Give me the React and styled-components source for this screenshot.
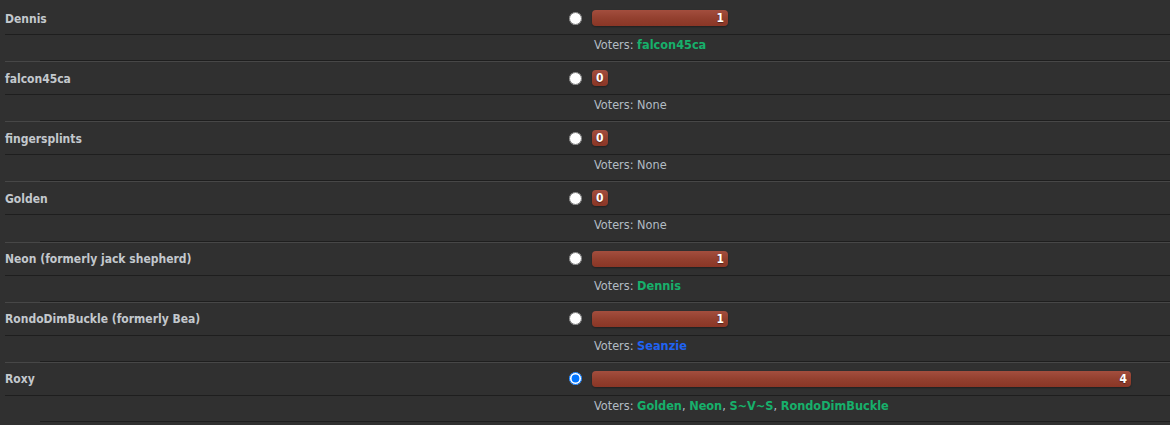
import React from "react";
import styled, { createGlobalStyle } from "styled-components";

const Global = createGlobalStyle`
  html, body {
    margin: 0;
    padding: 0;
    background: #303030;
    overflow: hidden;
  }
  body {
    font-family: "DejaVu Sans Condensed", "DejaVu Sans", Tahoma, sans-serif;
    font-stretch: condensed;
    font-size: 12px;
  }
`;

const List = styled.div`
  margin-top: 1px;
  width: 1170px;
`;

const Option = styled.div`
  border-top: 1px solid ${(p) => (p.$first ? "transparent" : "#474747")};
  margin-left: 5px;
`;

const MainRow = styled.div`
  display: grid;
  grid-template-columns: 558px 29px 1fr;
  align-items: center;
  height: 32px;
`;

const Name = styled.div`
  color: #c3c8cd;
  font-weight: bold;
  padding-top: 1px;
`;

const RadioCell = styled.div`
  display: flex;
  align-items: center;
  padding-left: 6px;
`;

const Radio = styled.input`
  width: 13px;
  height: 13px;
  margin: 0;
`;

const BarCell = styled.div`
  display: flex;
  align-items: center;
`;

const Bar = styled.div`
  box-sizing: border-box;
  height: 16px;
  min-width: 15px;
  padding: 0 4px;
  border-radius: 4px;
  background: linear-gradient(to bottom, #a34e3e 0%, #93402f 50%, #8a3626 100%);
  box-shadow: 0 1px 2px rgba(0, 0, 0, 0.35);
  color: #ffffff;
  font-weight: bold;
  font-size: 12px;
  line-height: 16px;
  text-align: right;
  text-shadow: 0 1px 1px rgba(0, 0, 0, 0.4);
`;

const VotersRow = styled.div`
  display: grid;
  grid-template-columns: 558px 29px 1fr;
  border-top: 1px solid #1e1e1e;
  height: 25.17px;
`;

const VotersText = styled.div`
  grid-column: 3;
  padding: 2px 0 0 2px;
  line-height: 16px;
  font-size: 12.6px;
  color: #b3bcc4;
`;

const Voter = styled.span`
  font-weight: bold;
  color: ${(p) => p.$color};
`;

const BottomLine = styled.div`
  margin-left: 35px;
  height: 1px;
  background: #1e1e1e;
`;

const GREEN = "#17b06b";
const BLUE = "#2063f2";

const options = [
  { name: "Dennis", votes: 1, voters: [["falcon45ca", GREEN]] },
  { name: "falcon45ca", votes: 0, voters: [] },
  { name: "fingersplints", votes: 0, voters: [] },
  { name: "Golden", votes: 0, voters: [] },
  { name: "Neon (formerly jack shepherd)", votes: 1, voters: [["Dennis", GREEN]] },
  { name: "RondoDimBuckle (formerly Bea)", votes: 1, voters: [["Seanzie", BLUE]] },
  {
    name: "Roxy",
    votes: 4,
    checked: true,
    voters: [
      ["Golden", GREEN],
      ["Neon", GREEN],
      ["S~V~S", GREEN],
      ["RondoDimBuckle", GREEN],
    ],
  },
];

const MAX = 4;
const FULL = 538;

export default function App() {
  return (
    <>
      <Global />
      <List>
        {options.map((o, i) => (
          <Option key={o.name} $first={i === 0}>
            <MainRow>
              <Name>{o.name}</Name>
              <RadioCell>
                <Radio type="radio" name="poll" defaultChecked={!!o.checked} />
              </RadioCell>
              <BarCell>
                <Bar style={o.votes ? { width: `${Math.round((o.votes / MAX) * FULL) + 1}px` } : undefined}>
                  {o.votes}
                </Bar>
              </BarCell>
            </MainRow>
            <VotersRow>
              <VotersText>
                Voters:{" "}
                {o.voters.length === 0
                  ? "None"
                  : o.voters.map(([v, c], j) => (
                      <React.Fragment key={v}>
                        {j > 0 && ", "}
                        <Voter $color={c}>{v}</Voter>
                      </React.Fragment>
                    ))}
              </VotersText>
            </VotersRow>
            <BottomLine />
          </Option>
        ))}
      </List>
    </>
  );
}
